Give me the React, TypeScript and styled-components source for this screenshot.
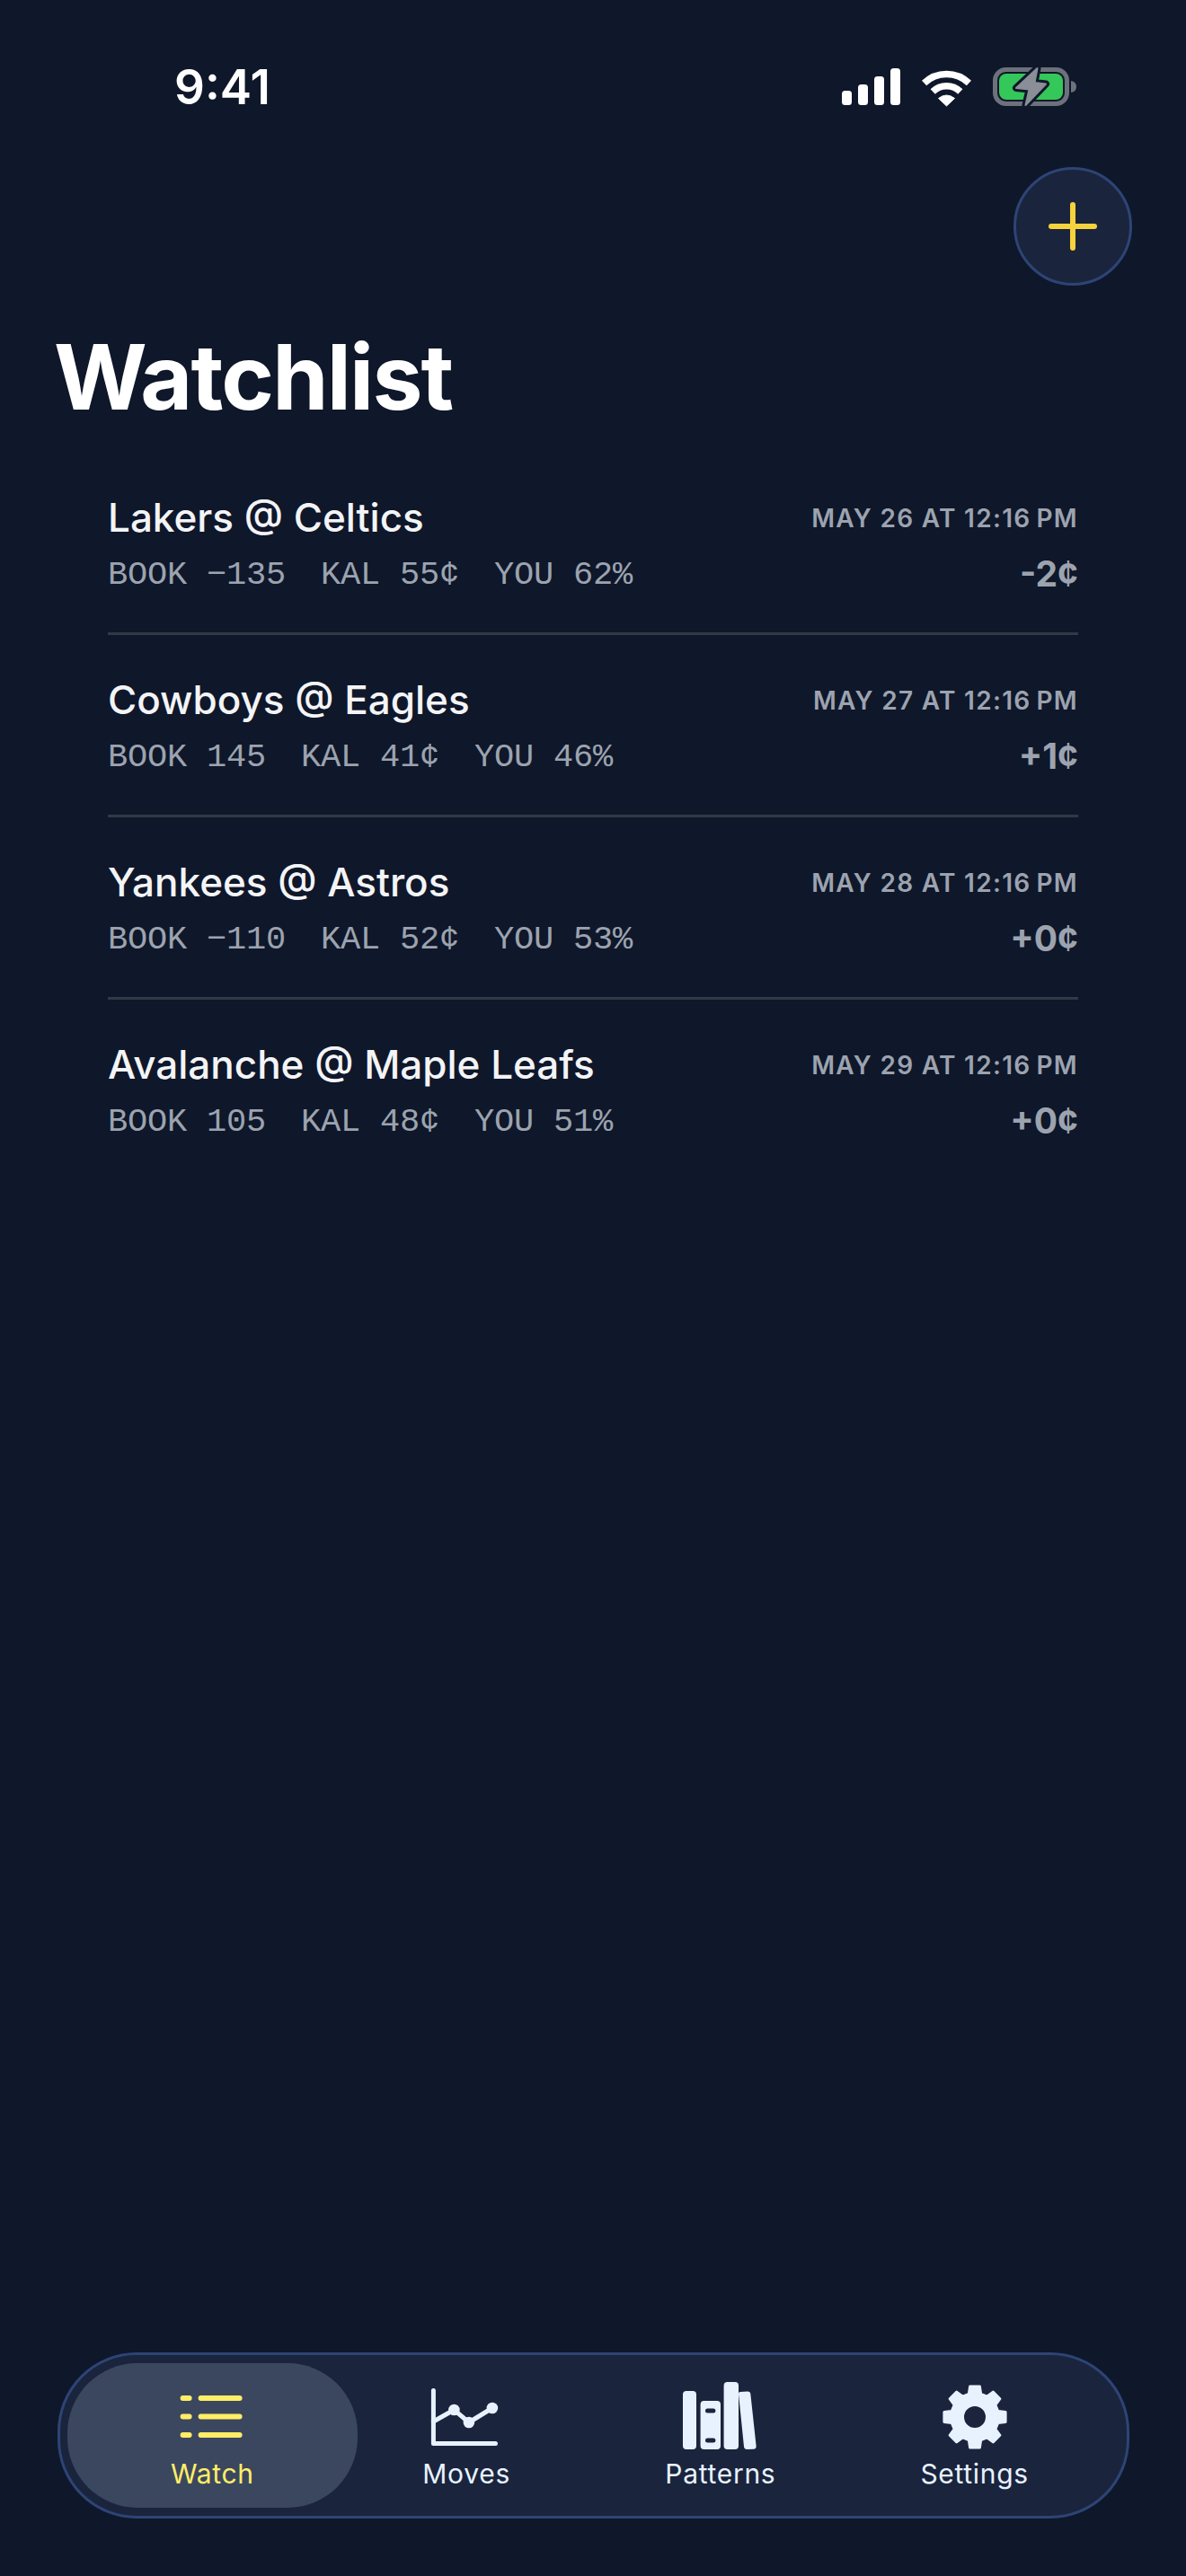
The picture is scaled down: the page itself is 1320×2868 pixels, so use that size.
import React from 'react';
import styled, { createGlobalStyle } from 'styled-components';

interface Game {
  name: string;
  stats: string[];
  date: string;
  delta: string;
}

const GAMES: Game[] = [
  { name: 'Lakers @ Celtics', stats: ['BOOK −135', 'KAL 55¢', 'YOU 62%'], date: 'MAY 26 AT 12:16\u202fPM', delta: '-2¢' },
  { name: 'Cowboys @ Eagles', stats: ['BOOK 145', 'KAL 41¢', 'YOU 46%'], date: 'MAY 27 AT 12:16\u202fPM', delta: '+1¢' },
  { name: 'Yankees @ Astros', stats: ['BOOK −110', 'KAL 52¢', 'YOU 53%'], date: 'MAY 28 AT 12:16\u202fPM', delta: '+0¢' },
  { name: 'Avalanche @ Maple Leafs', stats: ['BOOK 105', 'KAL 48¢', 'YOU 51%'], date: 'MAY 29 AT 12:16\u202fPM', delta: '+0¢' },
];

const GlobalStyle = createGlobalStyle`
  html, body {
    margin: 0;
    padding: 0;
    background: #0f172a;
  }
  * {
    box-sizing: border-box;
  }
`;

const Page = styled.div`
  width: 1320px;
  min-height: 2868px;
  display: flex;
  flex-direction: column;
  background: #0f172a;
  font-family: Inter, "Liberation Sans", sans-serif;
`;

const StatusBar = styled.div`
  height: 186px;
  padding: 66px 122px 0 194px;
  display: flex;
  justify-content: space-between;
  align-items: flex-start;
`;

const Time = styled.div`
  font-size: 53px;
  line-height: 62px;
  font-weight: 600;
  color: #fff;
`;

const StatusIcons = styled.div`
  display: flex;
  align-items: center;
  gap: 23px;
  margin-top: 9px;

  svg {
    overflow: visible;
  }
`;

const Actions = styled.div`
  display: flex;
  justify-content: flex-end;
  padding-right: 60px;
`;

const AddButton = styled.button`
  width: 132px;
  height: 132px;
  padding: 0;
  border-radius: 50%;
  border: 3px solid #2d4475;
  background: #1a243d;
  display: flex;
  align-items: center;
  justify-content: center;
`;

const Title = styled.h1`
  margin: 42px 0 0;
  padding-left: 60px;
  font-size: 100px;
  line-height: 120px;
  font-weight: 700;
  letter-spacing: -1.8px;
  color: #fff;
`;

const List = styled.div`
  margin: 24px 120px 0;
`;

const Row = styled.div`
  display: grid;
  grid-template-columns: 1fr auto;
  align-items: center;
  row-gap: 15px;
  padding: 46px 0 39px;
  border-bottom: 3px solid #333845;

  &:last-child {
    border-bottom: none;
  }
`;

const Name = styled.div`
  font-size: 44px;
  line-height: 52px;
  font-weight: 500;
  color: #f3f4f6;
`;

const DateLabel = styled.div`
  padding-top: 2px;
  font-size: 28px;
  line-height: 50px;
  font-weight: 600;
  letter-spacing: 1.3px;
  color: #9ca3af;
  text-align: right;
`;

const Stats = styled.div`
  align-self: start;
  display: flex;
  gap: 39px;
  padding-top: 1px;
  font-family: "Liberation Mono", monospace;
  font-size: 37px;
  line-height: 44px;
  letter-spacing: -0.2px;
  color: #9ca3af;
`;

const Stat = styled.span``;

const Delta = styled.div`
  padding-bottom: 4px;
  font-size: 39px;
  line-height: 44px;
  font-weight: 700;
  color: #9ca3af;
  text-align: right;
`;

const TabBarWrap = styled.div`
  margin-top: auto;
  padding: 0 63px 64px 64px;
`;

const TabBar = styled.nav`
  height: 185px;
  padding: 9px 28px;
  display: grid;
  grid-template-columns: repeat(4, 1fr);
  border: 3px solid #2d4475;
  border-radius: 88px;
  background: #1a243d;
`;

const Tab = styled.div<{ $active?: boolean }>`
  position: relative;
  display: flex;
  flex-direction: column;
  align-items: center;
  padding-top: 19px;
  color: ${(p) => (p.$active ? '#ffee66' : '#e8f2ff')};

  ${(p) =>
    p.$active &&
    `
    &::before {
      content: '';
      position: absolute;
      top: 0;
      bottom: 0;
      left: -20px;
      right: -20px;
      border-radius: 78px;
      background: #3b475f;
    }
  `}
`;

const TabIcon = styled.svg`
  position: relative;
  width: 90px;
  height: 80px;
  display: block;
`;

const TabLabel = styled.span`
  position: relative;
  margin-top: 6px;
  font-size: 30px;
  line-height: 36px;
  font-weight: 400;
  letter-spacing: 0.7px;
`;

const SignalIcon = () => (
  <svg width="65" height="41" viewBox="0 0 65 41">
    <rect x="0" y="25" width="11" height="16" rx="3.5" fill="#fff" />
    <rect x="18" y="18" width="11" height="23" rx="3.5" fill="#fff" />
    <rect x="36" y="9" width="11" height="32" rx="3.5" fill="#fff" />
    <rect x="54" y="0" width="11" height="41" rx="3.5" fill="#fff" />
  </svg>
);

const WifiIcon = () => (
  <svg width="57" height="42" viewBox="0 0 57 42">
    <path d="M3.6 16.5 A36 36 0 0 1 53.4 16.5" fill="none" stroke="#fff" strokeWidth="7.5" />
    <path d="M13.2 26 A22 22 0 0 1 43.8 26" fill="none" stroke="#fff" strokeWidth="7.5" />
    <path d="M28.5 42 L19.5 33.5 Q28.5 26.5 37.5 33.5 Z" fill="#fff" stroke="#fff" strokeLinejoin="round" />
  </svg>
);

const BOLT = 'M49.5 1 L26 23 L40.5 24.5 L36.5 42 L59 18.5 L46.5 17 Z';

const BatteryIcon = () => (
  <svg width="93" height="43" viewBox="0 0 93 43">
    <rect x="2.5" y="2.5" width="80" height="38" rx="12" fill="none" stroke="#6d717b" strokeWidth="5" />
    <rect x="7" y="7" width="71" height="29" rx="8" fill="#34c759" />
    <path d="M87 15 Q93 16 93 21.5 Q93 27 87 28 Z" fill="#6d717b" />
    <path d={BOLT} fill="#0f172a" stroke="#0f172a" strokeWidth="8" strokeLinejoin="round" />
    <path d={BOLT} fill="#8a8e97" stroke="#8a8e97" strokeWidth="2" strokeLinejoin="round" />
  </svg>
);

const WatchGlyph = () => (
  <TabIcon viewBox="0 0 90 80" fill="none" stroke="currentColor" strokeWidth="6" strokeLinecap="round">
    <path d="M12.6 20 H19.6 M32.6 20 H75.6" />
    <path d="M12.6 40.5 H19.6 M32.6 40.5 H75.6" />
    <path d="M12.6 61 H19.6 M32.6 61 H75.6" />
  </TabIcon>
);

const MovesGlyph = () => (
  <TabIcon viewBox="0 0 90 80" fill="none" stroke="currentColor" strokeWidth="5" strokeLinecap="round" strokeLinejoin="round">
    <path d="M8.4 11.5 V70.5 H77.5" />
    <path d="M8.4 46 L31.4 33 L47.9 47 L73.9 31" />
    <circle cx="31.4" cy="33" r="6.3" fill="currentColor" stroke="none" />
    <circle cx="47.9" cy="47" r="6.3" fill="currentColor" stroke="none" />
    <circle cx="73.9" cy="31" r="6.3" fill="currentColor" stroke="none" />
  </TabIcon>
);

const PatternsGlyph = () => (
  <TabIcon viewBox="0 0 90 80" fill="currentColor">
    <rect x="3" y="12" width="15" height="65" rx="4" />
    <rect x="22.6" y="23" width="22.4" height="54" rx="4" />
    <rect x="48.6" y="2" width="16.4" height="75" rx="4" />
    <path d="M65 15 Q65 13 67 13 L75 12.5 Q78 12.5 78.3 15 L84.6 73 Q85 76.5 81.5 76.7 L74.5 77 Q71.3 77 71 74 Z" />
    <rect x="28" y="31.5" width="11.4" height="5" rx="2.5" fill="#1a243d" />
    <rect x="28" y="64.5" width="11.4" height="5" rx="2.5" fill="#1a243d" />
  </TabIcon>
);

// 8 tooth gear, built once from polar points
const gearPath = (() => {
  const cx = 45;
  const cy = 41;
  const pt = (r: number, deg: number) => {
    const a = ((deg - 90) * Math.PI) / 180;
    return `${(cx + r * Math.cos(a)).toFixed(2)} ${(cy + r * Math.sin(a)).toFixed(2)}`;
  };
  let d = '';
  for (let i = 0; i < 8; i++) {
    const c = i * 45;
    d += `${i === 0 ? 'M' : 'L'}${pt(26.5, c - 14.5)} L${pt(34.5, c - 9)} L${pt(34.5, c + 9)} L${pt(26.5, c + 14.5)} `;
  }
  return `${d}Z M${cx - 13.5} ${cy} a13.5 13.5 0 1 0 27 0 a13.5 13.5 0 1 0 -27 0 Z`;
})();

const SettingsGlyph = () => (
  <TabIcon viewBox="0 0 90 80">
    <path d={gearPath} fill="currentColor" fillRule="evenodd" stroke="currentColor" strokeWidth="3" strokeLinejoin="round" />
  </TabIcon>
);

const App: React.FC = () => (
  <Page>
    <GlobalStyle />
    <StatusBar>
      <Time>9:41</Time>
      <StatusIcons>
        <SignalIcon />
        <WifiIcon />
        <BatteryIcon />
      </StatusIcons>
    </StatusBar>

    <Actions>
      <AddButton aria-label="Add">
        <svg width="54" height="54" viewBox="0 0 54 54" fill="none" stroke="#f6d33c" strokeWidth="6" strokeLinecap="round">
          <path d="M27 3 V51 M3 27 H51" />
        </svg>
      </AddButton>
    </Actions>

    <Title>Watchlist</Title>

    <List>
      {GAMES.map((game) => (
        <Row key={game.name}>
          <Name>{game.name}</Name>
          <DateLabel>{game.date}</DateLabel>
          <Stats>
            {game.stats.map((stat) => (
              <Stat key={stat}>{stat}</Stat>
            ))}
          </Stats>
          <Delta>{game.delta}</Delta>
        </Row>
      ))}
    </List>

    <TabBarWrap>
      <TabBar>
        <Tab $active>
          <WatchGlyph />
          <TabLabel>Watch</TabLabel>
        </Tab>
        <Tab>
          <MovesGlyph />
          <TabLabel>Moves</TabLabel>
        </Tab>
        <Tab>
          <PatternsGlyph />
          <TabLabel>Patterns</TabLabel>
        </Tab>
        <Tab>
          <SettingsGlyph />
          <TabLabel>Settings</TabLabel>
        </Tab>
      </TabBar>
    </TabBarWrap>
  </Page>
);

export default App;
